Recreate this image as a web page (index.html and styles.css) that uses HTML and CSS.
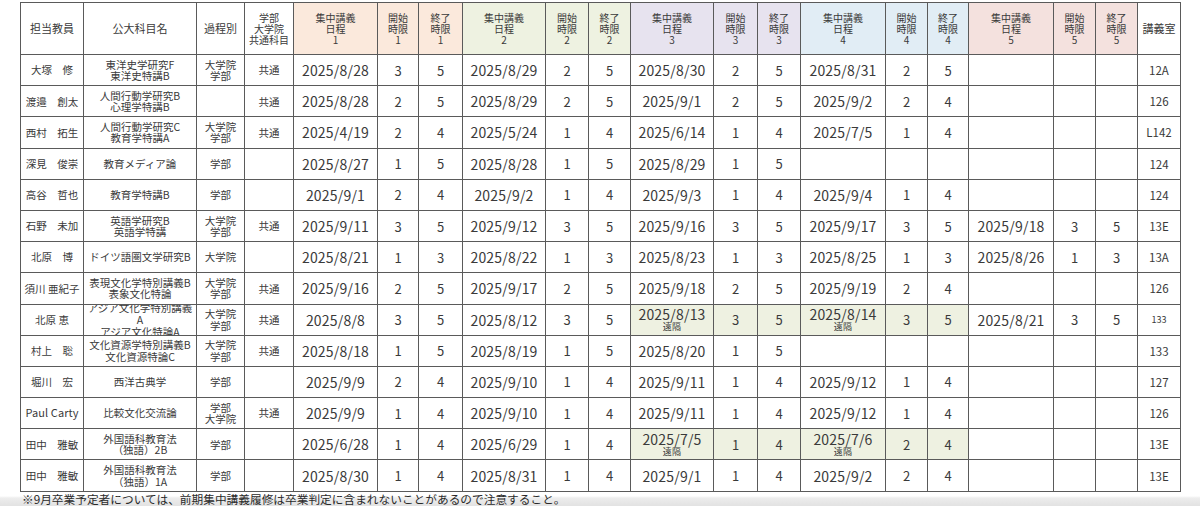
FILE: index.html
```html
<!DOCTYPE html>
<html lang="ja">
<head>
<meta charset="utf-8">
<title>集中講義日程</title>
<link rel="stylesheet" href="styles.css">
</head>
<body>
<table class="sched">
<colgroup>
<col class="w63"><col class="w113"><col class="w48"><col class="w49">
<col class="w84"><col class="w41"><col class="w44">
<col class="w83"><col class="w43"><col class="w42">
<col class="w83"><col class="w44"><col class="w43">
<col class="w85"><col class="w42"><col class="w41">
<col class="w85"><col class="w42"><col class="w42">
<col class="w43">
</colgroup>
<thead>
<tr>
<th class="hl">担当教員</th><th class="hl">公大科目名</th><th class="hl">過程別</th><th>学部<br>大学院<br>共通科目</th>
<th class="g1">集中講義<br>日程<br>1</th><th class="g1">開始<br>時限<br>1</th><th class="g1">終了<br>時限<br>1</th>
<th class="g2">集中講義<br>日程<br>2</th><th class="g2">開始<br>時限<br>2</th><th class="g2">終了<br>時限<br>2</th>
<th class="g3">集中講義<br>日程<br>3</th><th class="g3">開始<br>時限<br>3</th><th class="g3">終了<br>時限<br>3</th>
<th class="g4">集中講義<br>日程<br>4</th><th class="g4">開始<br>時限<br>4</th><th class="g4">終了<br>時限<br>4</th>
<th class="g5">集中講義<br>日程<br>5</th><th class="g5">開始<br>時限<br>5</th><th class="g5">終了<br>時限<br>5</th>
<th class="hl">講義室</th>
</tr>
</thead>
<tbody>
<tr>
<td class="sm">大塚　修</td><td class="sm">東洋史学研究F<br>東洋史特講B</td><td class="sm">大学院<br>学部</td><td class="sm">共通</td>
<td class="dt">2025/8/28</td><td class="n">3</td><td class="n">5</td>
<td class="dt">2025/8/29</td><td class="n">2</td><td class="n">5</td>
<td class="dt">2025/8/30</td><td class="n">2</td><td class="n">5</td>
<td class="dt">2025/8/31</td><td class="n">2</td><td class="n">5</td>
<td></td><td></td><td></td><td class="rm">12A</td>
</tr>
<tr>
<td class="sm">渡邉　創太</td><td class="sm">人間行動学研究B<br>心理学特講B</td><td class="sm"></td><td class="sm">共通</td>
<td class="dt">2025/8/28</td><td class="n">2</td><td class="n">5</td>
<td class="dt">2025/8/29</td><td class="n">2</td><td class="n">5</td>
<td class="dt">2025/9/1</td><td class="n">2</td><td class="n">5</td>
<td class="dt">2025/9/2</td><td class="n">2</td><td class="n">4</td>
<td></td><td></td><td></td><td class="rm">126</td>
</tr>
<tr>
<td class="sm">西村　拓生</td><td class="sm">人間行動学研究C<br>教育学特講A</td><td class="sm">大学院<br>学部</td><td class="sm">共通</td>
<td class="dt">2025/4/19</td><td class="n">2</td><td class="n">4</td>
<td class="dt">2025/5/24</td><td class="n">1</td><td class="n">4</td>
<td class="dt">2025/6/14</td><td class="n">1</td><td class="n">4</td>
<td class="dt">2025/7/5</td><td class="n">1</td><td class="n">4</td>
<td></td><td></td><td></td><td class="rm">L142</td>
</tr>
<tr>
<td class="sm">深見　俊崇</td><td class="sm">教育メディア論</td><td class="sm">学部</td><td class="sm"></td>
<td class="dt">2025/8/27</td><td class="n">1</td><td class="n">5</td>
<td class="dt">2025/8/28</td><td class="n">1</td><td class="n">5</td>
<td class="dt">2025/8/29</td><td class="n">1</td><td class="n">5</td>
<td></td><td></td><td></td>
<td></td><td></td><td></td><td class="rm">124</td>
</tr>
<tr>
<td class="sm">高谷　哲也</td><td class="sm">教育学特講B</td><td class="sm">学部</td><td class="sm"></td>
<td class="dt">2025/9/1</td><td class="n">2</td><td class="n">4</td>
<td class="dt">2025/9/2</td><td class="n">1</td><td class="n">4</td>
<td class="dt">2025/9/3</td><td class="n">1</td><td class="n">4</td>
<td class="dt">2025/9/4</td><td class="n">1</td><td class="n">4</td>
<td></td><td></td><td></td><td class="rm">124</td>
</tr>
<tr>
<td class="sm">石野　未加</td><td class="sm">英語学研究B<br>英語学特講</td><td class="sm">大学院<br>学部</td><td class="sm">共通</td>
<td class="dt">2025/9/11</td><td class="n">3</td><td class="n">5</td>
<td class="dt">2025/9/12</td><td class="n">3</td><td class="n">5</td>
<td class="dt">2025/9/16</td><td class="n">3</td><td class="n">5</td>
<td class="dt">2025/9/17</td><td class="n">3</td><td class="n">5</td>
<td class="dt">2025/9/18</td><td class="n">3</td><td class="n">5</td><td class="rm">13E</td>
</tr>
<tr>
<td class="sm">北原　博</td><td class="sm">ドイツ語圏文学研究B</td><td class="sm">大学院</td><td class="sm"></td>
<td class="dt">2025/8/21</td><td class="n">1</td><td class="n">3</td>
<td class="dt">2025/8/22</td><td class="n">1</td><td class="n">3</td>
<td class="dt">2025/8/23</td><td class="n">1</td><td class="n">3</td>
<td class="dt">2025/8/25</td><td class="n">1</td><td class="n">3</td>
<td class="dt">2025/8/26</td><td class="n">1</td><td class="n">3</td><td class="rm">13A</td>
</tr>
<tr>
<td class="sm">須川 亜紀子</td><td class="sm">表現文化学特別講義B<br>表象文化特論</td><td class="sm">大学院<br>学部</td><td class="sm">共通</td>
<td class="dt">2025/9/16</td><td class="n">2</td><td class="n">5</td>
<td class="dt">2025/9/17</td><td class="n">2</td><td class="n">5</td>
<td class="dt">2025/9/18</td><td class="n">2</td><td class="n">5</td>
<td class="dt">2025/9/19</td><td class="n">2</td><td class="n">4</td>
<td></td><td></td><td></td><td class="rm">126</td>
</tr>
<tr>
<td class="sm">北原 恵</td><td class="sm"><div class="clip">アジア文化学特別講義<br>A<br>アジア文化特論A</div></td><td class="sm">大学院<br>学部</td><td class="sm">共通</td>
<td class="dt">2025/8/8</td><td class="n">3</td><td class="n">5</td>
<td class="dt">2025/8/12</td><td class="n">3</td><td class="n">5</td>
<td class="dt rem"><span class="d">2025/8/13</span><span class="r">遠隔</span></td><td class="n rem">3</td><td class="n rem">5</td>
<td class="dt rem"><span class="d">2025/8/14</span><span class="r">遠隔</span></td><td class="n rem">3</td><td class="n rem">5</td>
<td class="dt">2025/8/21</td><td class="n">3</td><td class="n">5</td><td class="rm tiny">133</td>
</tr>
<tr>
<td class="sm">村上　聡</td><td class="sm">文化資源学特別講義B<br>文化資源特論C</td><td class="sm">大学院<br>学部</td><td class="sm">共通</td>
<td class="dt">2025/8/18</td><td class="n">1</td><td class="n">5</td>
<td class="dt">2025/8/19</td><td class="n">1</td><td class="n">5</td>
<td class="dt">2025/8/20</td><td class="n">1</td><td class="n">5</td>
<td></td><td></td><td></td>
<td></td><td></td><td></td><td class="rm">133</td>
</tr>
<tr>
<td class="sm">堀川　宏</td><td class="sm">西洋古典学</td><td class="sm">学部</td><td class="sm"></td>
<td class="dt">2025/9/9</td><td class="n">2</td><td class="n">4</td>
<td class="dt">2025/9/10</td><td class="n">1</td><td class="n">4</td>
<td class="dt">2025/9/11</td><td class="n">1</td><td class="n">4</td>
<td class="dt">2025/9/12</td><td class="n">1</td><td class="n">4</td>
<td></td><td></td><td></td><td class="rm">127</td>
</tr>
<tr>
<td class="sm en">Paul Carty</td><td class="sm">比較文化交流論</td><td class="sm">学部<br>大学院</td><td class="sm">共通</td>
<td class="dt">2025/9/9</td><td class="n">1</td><td class="n">4</td>
<td class="dt">2025/9/10</td><td class="n">1</td><td class="n">4</td>
<td class="dt">2025/9/11</td><td class="n">1</td><td class="n">4</td>
<td class="dt">2025/9/12</td><td class="n">1</td><td class="n">4</td>
<td></td><td></td><td></td><td class="rm">126</td>
</tr>
<tr>
<td class="sm">田中　雅敏</td><td class="sm">外国語科教育法<br>（独語）2B</td><td class="sm">学部</td><td class="sm"></td>
<td class="dt">2025/6/28</td><td class="n">1</td><td class="n">4</td>
<td class="dt">2025/6/29</td><td class="n">1</td><td class="n">4</td>
<td class="dt rem"><span class="d">2025/7/5</span><span class="r">遠隔</span></td><td class="n rem">1</td><td class="n rem">4</td>
<td class="dt rem"><span class="d">2025/7/6</span><span class="r">遠隔</span></td><td class="n rem">2</td><td class="n rem">4</td>
<td></td><td></td><td></td><td class="rm">13E</td>
</tr>
<tr>
<td class="sm">田中　雅敏</td><td class="sm">外国語科教育法<br>（独語）1A</td><td class="sm">学部</td><td class="sm"></td>
<td class="dt">2025/8/30</td><td class="n">1</td><td class="n">4</td>
<td class="dt">2025/8/31</td><td class="n">1</td><td class="n">4</td>
<td class="dt">2025/9/1</td><td class="n">1</td><td class="n">4</td>
<td class="dt">2025/9/2</td><td class="n">2</td><td class="n">4</td>
<td></td><td></td><td></td><td class="rm">13E</td>
</tr>
</tbody>
</table>
<p class="note">※9月卒業予定者については、前期集中講義履修は卒業判定に含まれないことがあるので注意すること。</p>
</body>
</html>
```

FILE: styles.css
```css
html {
  background: linear-gradient(to bottom, #ffffff 0, #ffffff 496px, #ededed 498px, #e2e2e2 506px);
  height: 506px;
}
body {
  margin: 0;
  padding: 2px 20px 0 20px;
  font-family: "Noto Sans CJK JP", "Noto Sans", sans-serif;
  color: #3a3a3a;
  overflow: hidden;
  height: 504px;
}
.sched {
  border-collapse: collapse;
  table-layout: fixed;
  width: 1160px;
  border: 1.5px solid #4a4a4a;
}
.w41 { width: 41px; }
.w42 { width: 42px; }
.w43 { width: 43px; }
.w44 { width: 44px; }
.w48 { width: 48px; }
.w49 { width: 49px; }
.w63 { width: 63px; }
.w83 { width: 83px; }
.w84 { width: 84px; }
.w85 { width: 85px; }
.w113 { width: 113px; }
.sched th, .sched td {
  border: 1px solid #5a5a5a;
  padding: 0;
  text-align: center;
  vertical-align: middle;
  overflow: hidden;
  white-space: nowrap;
}
.sched th {
  height: 51px;
  font-weight: normal;
  font-size: 10px;
  line-height: 11px;
  color: #3a3a3a;
}
.sched th.hl {
  font-size: 11px;
}
.g1 { background: #fbe9dc; }
.g2 { background: #eef2e1; }
.g3 { background: #e7e3ef; }
.g4 { background: #e1edf5; }
.g5 { background: #f4e1de; }
.sched td {
  height: 30.2px;
}
.sm {
  font-size: 10.5px;
  line-height: 11.5px;
}
.en {
  font-size: 11px;
  letter-spacing: 0.1px;
}
.dt {
  font-size: 14px;
  letter-spacing: 0.2px;
}
.n {
  font-size: 13px;
}
.rm {
  font-size: 11.5px;
}
.tiny {
  font-size: 9px;
}
.rem {
  background: #eef1e1;
}
.rem .d {
  display: block;
  line-height: 15px;
}
.rem .r {
  display: block;
  font-size: 9px;
  line-height: 10px;
}
.clip {
  height: 30px;
  overflow: hidden;
  display: flex;
  flex-direction: column;
  justify-content: center;
  line-height: 12px;
}
.note {
  margin: 0;
  padding-left: 2px;
  font-size: 11.7px;
  line-height: 14px;
  color: #2a2a2a;
}
```
